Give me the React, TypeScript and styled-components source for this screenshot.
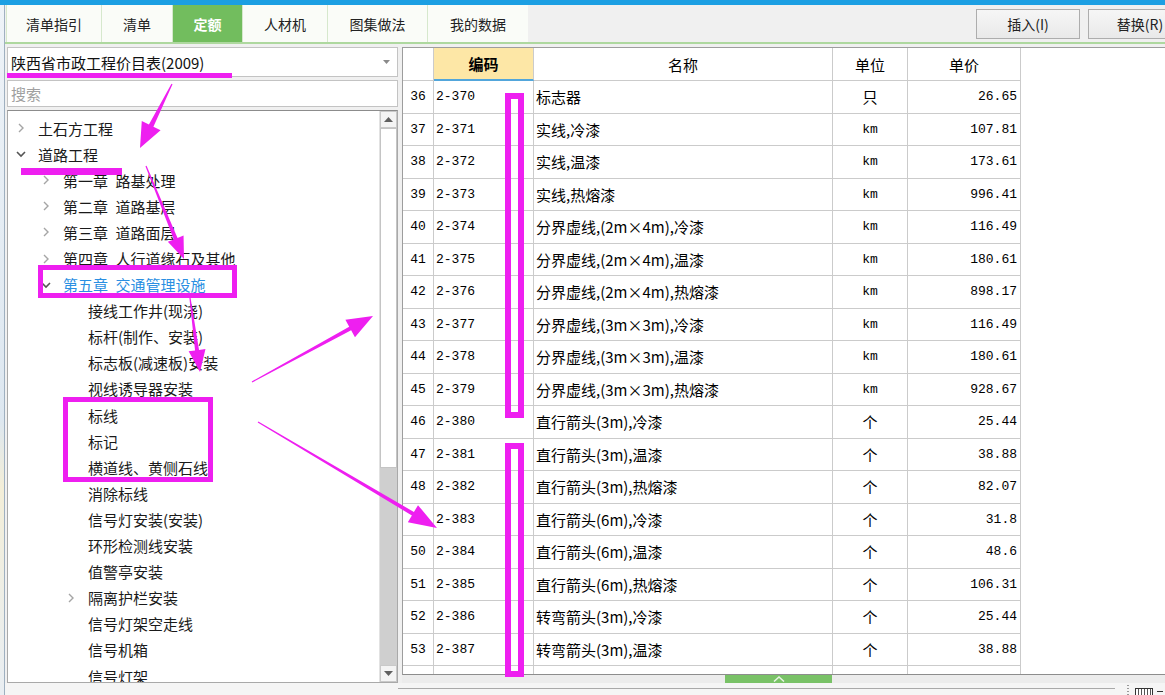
import React from "react";
import styled, { createGlobalStyle } from "styled-components";

const GlobalStyle = createGlobalStyle`
  html, body {
    margin: 0;
    padding: 0;
  }
  body {
    font-family: "Noto Sans CJK SC", "Noto Sans", sans-serif;
    color: #1a1a1a;
    background: #f0f0f0;
  }
`;

type TreeNode = {
  label: string;
  level: number;
  expand?: "open" | "closed";
  active?: boolean;
};

const treeNodes: TreeNode[] = [
  { label: "土石方工程", level: 0, expand: "closed" },
  { label: "道路工程", level: 0, expand: "open" },
  { label: "第一章\u2002路基处理", level: 1, expand: "closed" },
  { label: "第二章\u2002道路基层", level: 1, expand: "closed" },
  { label: "第三章\u2002道路面层", level: 1, expand: "closed" },
  { label: "第四章\u2002人行道缘石及其他", level: 1, expand: "closed" },
  { label: "第五章\u2002交通管理设施", level: 1, expand: "open", active: true },
  { label: "接线工作井(现浇)", level: 2 },
  { label: "标杆(制作、安装)", level: 2 },
  { label: "标志板(减速板)安装", level: 2 },
  { label: "视线诱导器安装", level: 2 },
  { label: "标线", level: 2 },
  { label: "标记", level: 2 },
  { label: "横道线、黄侧石线", level: 2 },
  { label: "消除标线", level: 2 },
  { label: "信号灯安装(安装)", level: 2 },
  { label: "环形检测线安装", level: 2 },
  { label: "值警亭安装", level: 2 },
  { label: "隔离护栏安装", level: 2, expand: "closed" },
  { label: "信号灯架空走线", level: 2 },
  { label: "信号机箱", level: 2 },
  { label: "信号灯架", level: 2 },
];

const rows: [number, string, string, string, string][] = [
  [36, "2-370", "标志器", "只", "26.65"],
  [37, "2-371", "实线,冷漆", "km", "107.81"],
  [38, "2-372", "实线,温漆", "km", "173.61"],
  [39, "2-373", "实线,热熔漆", "km", "996.41"],
  [40, "2-374", "分界虚线,(2m×4m),冷漆", "km", "116.49"],
  [41, "2-375", "分界虚线,(2m×4m),温漆", "km", "180.61"],
  [42, "2-376", "分界虚线,(2m×4m),热熔漆", "km", "898.17"],
  [43, "2-377", "分界虚线,(3m×3m),冷漆", "km", "116.49"],
  [44, "2-378", "分界虚线,(3m×3m),温漆", "km", "180.61"],
  [45, "2-379", "分界虚线,(3m×3m),热熔漆", "km", "928.67"],
  [46, "2-380", "直行箭头(3m),冷漆", "个", "25.44"],
  [47, "2-381", "直行箭头(3m),温漆", "个", "38.88"],
  [48, "2-382", "直行箭头(3m),热熔漆", "个", "82.07"],
  [49, "2-383", "直行箭头(6m),冷漆", "个", "31.8"],
  [50, "2-384", "直行箭头(6m),温漆", "个", "48.6"],
  [51, "2-385", "直行箭头(6m),热熔漆", "个", "106.31"],
  [52, "2-386", "转弯箭头(3m),冷漆", "个", "25.44"],
  [53, "2-387", "转弯箭头(3m),温漆", "个", "38.88"],
];

const tabs = [
  { text: "清单指引", width: 95 },
  { text: "清单", width: 71 },
  { text: "定额", width: 70, active: true },
  { text: "人材机", width: 85 },
  { text: "图集做法", width: 100 },
  { text: "我的数据", width: 101 },
];

const MONO = `"Liberation Mono", "Noto Sans CJK SC", monospace`;
const COLS = "31px 100px 299px 75px 113px";
const MAGENTA = "#ee1ff0";

// tapered arrow: thin at the start, solid head at the tip
function arrowPoints(x1: number, y1: number, x2: number, y2: number, w: number, hl: number, hw: number) {
  const dx = x2 - x1;
  const dy = y2 - y1;
  const len = Math.hypot(dx, dy);
  const ux = dx / len;
  const uy = dy / len;
  const px = -uy;
  const py = ux;
  const bx = x2 - ux * hl;
  const by = y2 - uy * hl;
  const pts = [
    [x1 + px * 0.6, y1 + py * 0.6],
    [bx + (px * w) / 2, by + (py * w) / 2],
    [bx + (px * hw) / 2, by + (py * hw) / 2],
    [x2, y2],
    [bx - (px * hw) / 2, by - (py * hw) / 2],
    [bx - (px * w) / 2, by - (py * w) / 2],
    [x1 - px * 0.6, y1 - py * 0.6],
  ];
  return pts.map((p) => p.join(",")).join(" ");
}

const arrows = [
  { from: [172, 84], to: [140, 148], w: 5, hl: 25, hw: 21 },
  { from: [146, 166], to: [184, 259], w: 4, hl: 22, hw: 17 },
  { from: [190, 298], to: [200, 372], w: 4, hl: 22, hw: 17 },
  { from: [252, 382], to: [373, 316], w: 4, hl: 26, hw: 20 },
  { from: [258, 422], to: [437, 528], w: 4, hl: 28, hw: 20 },
];

export default function App() {
  return (
    <Page>
      <GlobalStyle />
      <TopStrip />
      <Main>
        <Sliver />
        <Workspace>
          <TabBar>
            {tabs.map((t) => (
              <Tab key={t.text} $width={t.width} $active={!!t.active}>
                {t.text}
              </Tab>
            ))}
            <Spacer />
            <ToolGroup>
              <ToolButton>插入(I)</ToolButton>
              <ToolButton>替换(R)</ToolButton>
            </ToolGroup>
          </TabBar>
          <Body>
            <LeftPanel>
              <Select>
                <span>陕西省市政工程价目表(2009)</span>
                <svg width="7" height="4" viewBox="0 0 7 4">
                  <polygon points="0,0 7,0 3.5,4" fill="#8a8a8a" />
                </svg>
              </Select>
              <Search>搜索</Search>
              <TreeBox>
                <TreeList>
                  {treeNodes.map((n) => (
                    <TreeRow key={n.label} $level={n.level} $active={!!n.active}>
                      <Chevron>
                        {n.expand === "closed" && (
                          <svg width="12" height="12" viewBox="0 0 12 12">
                            <polyline points="4,2 8,6 4,10" fill="none" stroke="#a5a5a5" strokeWidth="1.4" />
                          </svg>
                        )}
                        {n.expand === "open" && (
                          <svg width="12" height="12" viewBox="0 0 12 12">
                            <polyline points="2,4 6,8 10,4" fill="none" stroke="#555" strokeWidth="1.6" />
                          </svg>
                        )}
                      </Chevron>
                      {n.label}
                    </TreeRow>
                  ))}
                </TreeList>
                <ScrollBar>
                  <ScrollButton>
                    <svg width="9" height="5" viewBox="0 0 9 5">
                      <polygon points="0,5 9,5 4.5,0" fill="#606060" />
                    </svg>
                  </ScrollButton>
                  <Thumb />
                  <Track />
                  <ScrollButton>
                    <svg width="9" height="5" viewBox="0 0 9 5">
                      <polygon points="0,0 9,0 4.5,5" fill="#606060" />
                    </svg>
                  </ScrollButton>
                </ScrollBar>
              </TreeBox>
            </LeftPanel>
            <RightPanel>
              <TableFrame>
                <GridRow $h={33}>
                  <HeadCell $align="center" />
                  <HeadCell $align="center" $key>
                    编码
                  </HeadCell>
                  <HeadCell $align="center">名称</HeadCell>
                  <HeadCell $align="center">单位</HeadCell>
                  <HeadCell $align="center">单价</HeadCell>
                </GridRow>
                {rows.map(([no, code, name, unit, price]) => (
                  <GridRow key={no} $h={32.5}>
                    <Cell $align="center" $mono>
                      {no}
                    </Cell>
                    <Cell $align="left" $mono>
                      {code}
                    </Cell>
                    <Cell $align="left">{name}</Cell>
                    <Cell $align="center" $mono={unit === "km"}>
                      {unit}
                    </Cell>
                    <Cell $align="right" $mono>
                      {price}
                    </Cell>
                  </GridRow>
                ))}
                <GridRow $h={32.5}>
                  <Cell $align="center" />
                  <Cell $align="left" />
                  <Cell $align="left" />
                  <Cell $align="center" />
                  <Cell $align="right" />
                </GridRow>
              </TableFrame>
              <HScroll>
                <SplitTab>
                  <svg width="12" height="6" viewBox="0 0 12 6">
                    <polyline points="1,5.5 6,1 11,5.5" fill="none" stroke="#e8f5e3" strokeWidth="1.5" />
                  </svg>
                </SplitTab>
              </HScroll>
            </RightPanel>
          </Body>
          <Footer>
            <FooterLine />
            <FooterTools>
              <Dots />
              <MiniBox />
              <MiniDash />
            </FooterTools>
          </Footer>
        </Workspace>
      </Main>

      <Annotations width="1165" height="695" viewBox="0 0 1165 695">
        <rect x="7" y="73" width="225" height="5" fill={MAGENTA} />
        <rect x="21" y="168" width="101" height="7" fill={MAGENTA} />
        <rect x="40.5" y="267.5" width="194" height="28" fill="none" stroke={MAGENTA} strokeWidth="5" />
        <rect x="65.5" y="399.5" width="145" height="80" fill="none" stroke={MAGENTA} strokeWidth="5" />
        <rect x="508" y="96" width="13" height="319" fill="none" stroke={MAGENTA} strokeWidth="6" />
        <rect x="508" y="446" width="13" height="228" fill="none" stroke={MAGENTA} strokeWidth="6" />
        {arrows.map((a, i) => (
          <polygon
            key={i}
            points={arrowPoints(a.from[0], a.from[1], a.to[0], a.to[1], a.w, a.hl, a.hw)}
            fill={MAGENTA}
          />
        ))}
      </Annotations>
    </Page>
  );
}

const Page = styled.div`
  position: relative;
  width: 1165px;
  height: 695px;
  display: flex;
  flex-direction: column;
  overflow: hidden;
  background: #f0f0f0;
`;

const TopStrip = styled.div`
  height: 5px;
  flex-shrink: 0;
  background: #1c9fe3;
`;

const Main = styled.div`
  flex: 1;
  min-height: 0;
  display: flex;
`;

const Sliver = styled.div`
  width: 5px;
  flex-shrink: 0;
  background: linear-gradient(#eef3f8, #dde7f0 60%, #f3eed8 70%, #e9eef3);
  border-right: 1px solid #9fb0c0;
  box-sizing: border-box;
`;

const Workspace = styled.div`
  flex: 1;
  min-width: 0;
  display: flex;
  flex-direction: column;
  overflow: hidden;
`;

const TabBar = styled.div`
  height: 39px;
  flex-shrink: 0;
  box-sizing: border-box;
  display: flex;
  align-items: stretch;
  padding-left: 1px;
  background: #f0f0f0;
  border-bottom: 2px solid #aed89f;
`;

const Tab = styled.div<{ $width: number; $active: boolean }>`
  width: ${({ $width }) => $width}px;
  flex-shrink: 0;
  box-sizing: border-box;
  display: flex;
  align-items: center;
  justify-content: center;
  font-size: 14px;
  border-left: 1px solid #d6e8cd;
  background: ${({ $active }) => ($active ? "#72bd5e" : "#fafcf8")};
  color: ${({ $active }) => ($active ? "#ffffff" : "#222")};
  font-weight: ${({ $active }) => ($active ? "bold" : "normal")};
  &:last-of-type {
    border-right: 1px solid #d6e8cd;
  }
`;

const Spacer = styled.div`
  flex: 1;
`;

const ToolGroup = styled.div`
  display: flex;
  gap: 8px;
  align-items: flex-start;
  padding-top: 4px;
  margin-right: -27px;
  flex-shrink: 0;
`;

const ToolButton = styled.div`
  width: 104px;
  height: 30px;
  box-sizing: border-box;
  display: flex;
  align-items: center;
  justify-content: center;
  font-size: 14px;
  color: #222;
  background: linear-gradient(#f6f6f6, #e9e9e9);
  border: 1px solid #adadad;
`;

const Body = styled.div`
  flex: 1;
  min-height: 0;
  display: flex;
`;

const LeftPanel = styled.div`
  width: 393px;
  flex-shrink: 0;
  box-sizing: border-box;
  padding: 3px 0 0 2px;
  display: flex;
  flex-direction: column;
  gap: 3px;
`;

const Select = styled.div`
  height: 30px;
  flex-shrink: 0;
  box-sizing: border-box;
  display: flex;
  align-items: center;
  justify-content: space-between;
  padding: 0 7px 0 3px;
  background: #fff;
  border: 1px solid #c3c3c3;
  font-size: 15px;
  color: #111;
`;

const Search = styled.div`
  height: 27px;
  flex-shrink: 0;
  box-sizing: border-box;
  display: flex;
  align-items: center;
  padding-left: 3px;
  background: #fff;
  border: 1px solid #c3c3c3;
  font-size: 15px;
  color: #a0a0a0;
`;

const TreeBox = styled.div`
  flex: 1;
  min-height: 0;
  display: flex;
  background: #fff;
  border: 1px solid #a9a9a9;
  border-top-color: #8c8c8c;
`;

const TreeList = styled.div`
  flex: 1;
  padding-top: 4px;
  overflow: hidden;
`;

const TreeRow = styled.div<{ $level: number; $active: boolean }>`
  height: 26.1px;
  display: flex;
  align-items: center;
  padding-left: ${({ $level }) => 7 + $level * 25}px;
  font-size: 15px;
  white-space: nowrap;
  color: ${({ $active }) => ($active ? "#2a8fe2" : "#1a1a1a")};
`;

const Chevron = styled.span`
  width: 12px;
  height: 12px;
  margin-right: 11px;
  flex-shrink: 0;
  display: flex;
`;

const ScrollBar = styled.div`
  width: 17px;
  flex-shrink: 0;
  display: flex;
  flex-direction: column;
  background: #d2d2d2;
  border-left: 1px solid #e2e2e2;
`;

const ScrollButton = styled.div`
  height: 17px;
  flex-shrink: 0;
  box-sizing: border-box;
  display: flex;
  align-items: center;
  justify-content: center;
  background: #f4f4f4;
  border: 1px solid #c9c9c9;
`;

const Thumb = styled.div`
  height: 340px;
  flex-shrink: 0;
  box-sizing: border-box;
  background: #ffffff;
  border: 1px solid #c4c4c4;
`;

const Track = styled.div`
  flex: 1;
  background: #cfcfcf;
`;

const RightPanel = styled.div`
  flex: 1;
  min-width: 0;
  box-sizing: border-box;
  padding: 3px 0 0 4px;
  display: flex;
  flex-direction: column;
`;

const TableFrame = styled.div`
  flex: 1;
  min-height: 0;
  overflow: hidden;
  display: flex;
  flex-direction: column;
  background: #fff;
  border-top: 1px solid #9d9d9d;
  border-left: 1px solid #9d9d9d;
  border-bottom: 1px solid #8d8d8d;
`;

const GridRow = styled.div<{ $h: number }>`
  display: grid;
  grid-template-columns: ${COLS};
  width: 618px;
  height: ${({ $h }) => $h}px;
  flex-shrink: 0;
`;

const Cell = styled.div<{ $align: "left" | "center" | "right"; $mono?: boolean }>`
  box-sizing: border-box;
  min-width: 0;
  display: flex;
  align-items: center;
  justify-content: ${({ $align }) =>
    $align === "left" ? "flex-start" : $align === "right" ? "flex-end" : "center"};
  padding: 0 3px 0 ${({ $align }) => ($align === "left" ? 2 : 3)}px;
  border-right: 1px solid #cbcbcb;
  border-bottom: 1px solid #cbcbcb;
  white-space: nowrap;
  overflow: hidden;
  font-family: ${({ $mono }) => ($mono ? MONO : `"Noto Sans CJK SC", sans-serif`)};
  font-size: ${({ $mono }) => ($mono ? "13px" : "15px")};
  color: #000;
`;

const HeadCell = styled(Cell)<{ $key?: boolean }>`
  font-size: 15px;
  background: ${({ $key }) => ($key ? "#fde7a6" : "#fff")};
  font-weight: ${({ $key }) => ($key ? "bold" : "normal")};
  border-bottom: ${({ $key }) => ($key ? "2px solid #52a6db" : "1px solid #cbcbcb")};
`;

const HScroll = styled.div`
  height: 8px;
  flex-shrink: 0;
  display: flex;
  justify-content: center;
  background: #ececec;
`;

const SplitTab = styled.div`
  width: 107px;
  height: 8px;
  margin-right: 10px;
  display: flex;
  align-items: center;
  justify-content: center;
  background: #79c267;
`;

const Footer = styled.div`
  height: 12px;
  flex-shrink: 0;
  position: relative;
  display: flex;
  justify-content: flex-end;
  background: #f5f5f5;
`;

const FooterLine = styled.div`
  position: absolute;
  left: 393px;
  right: 50px;
  top: 5px;
  height: 1px;
  background: #a9a9a9;
`;

const FooterTools = styled.div`
  display: flex;
  align-items: flex-end;
  gap: 4px;
  padding-right: 2px;
`;

const Dots = styled.div`
  width: 2px;
  height: 10px;
  margin-right: 2px;
  background: repeating-linear-gradient(#999 0 1px, transparent 1px 3px);
`;

const MiniBox = styled.div`
  width: 18px;
  height: 7px;
  box-sizing: border-box;
  border: 1px solid #333;
  border-bottom: none;
  background: repeating-linear-gradient(90deg, #fff 0 2px, #555 2px 3px);
`;

const MiniDash = styled.div`
  width: 6px;
  height: 1px;
  margin-bottom: 3px;
  background: #333;
`;

const Annotations = styled.svg`
  position: absolute;
  left: 0;
  top: 0;
  pointer-events: none;
`;
